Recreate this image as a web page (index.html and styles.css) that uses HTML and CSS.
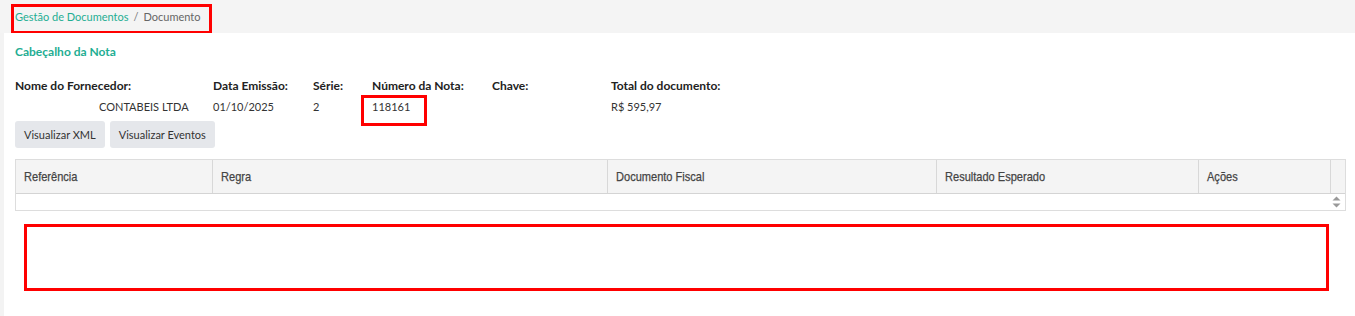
FILE: index.html
```html
<!DOCTYPE html>
<html lang="pt">
<head>
<meta charset="utf-8">
<link rel="stylesheet" href="styles.css">
</head>
<body>
<div class="topbar">
  <nav class="crumbs"><a class="crumb-link">Gestão de Documentos</a><span class="sep">/</span><span class="crumb-cur">Documento</span></nav>
  <div class="mark mark-crumb"></div>
</div>
<main class="page">
  <h2 class="section-title">Cabeçalho da Nota</h2>
  <div class="info">
    <div class="lbl">Nome do Fornecedor:</div>
    <div class="lbl">Data Emissão:</div>
    <div class="lbl">Série:</div>
    <div class="lbl">Número da Nota:</div>
    <div class="lbl">Chave:</div>
    <div class="lbl">Total do documento:</div>
    <div class="val val-name">CONTABEIS LTDA</div>
    <div class="val">01/10/2025</div>
    <div class="val">2</div>
    <div class="val val-num">118161<div class="mark mark-num"></div></div>
    <div class="val"></div>
    <div class="val">R$ 595,97</div>
  </div>
  <div class="actions">
    <button class="btn">Visualizar XML</button>
    <button class="btn">Visualizar Eventos</button>
  </div>
  <div class="grid">
    <div class="grid-head">
      <div class="th c1"><span class="th-txt">Referência</span></div>
      <div class="th c2"><span class="th-txt">Regra</span></div>
      <div class="th c3"><span class="th-txt">Documento Fiscal</span></div>
      <div class="th c4"><span class="th-txt">Resultado Esperado</span></div>
      <div class="th c5"><span class="th-txt">Ações</span></div>
      <div class="th c6"></div>
    </div>
    <div class="grid-body">
      <svg class="spin" width="9" height="12" viewBox="0 0 9 12"><path d="M4.5 0.5 L8.5 4.5 L0.5 4.5 Z" fill="#999"/><path d="M0.5 7.5 L8.5 7.5 L4.5 11.5 Z" fill="#999"/></svg>
    </div>
  </div>
  <div class="empty-box"></div>
</main>
</body>
</html>
```
FILE: styles.css
```css
html, body { margin: 0; padding: 0; }
body {
  background: #f3f3f3;
  font-family: Lato, "Noto Sans", sans-serif;
  font-size: 12px;
  color: #333;
  width: 1355px;
  height: 316px;
  overflow: hidden;
}
.topbar {
  position: relative;
  height: 33px;
  background: #f4f4f4;
  display: flex;
  align-items: center;
  padding-left: 15px;
}
.crumbs { display: flex; align-items: center; gap: 5px; font-size: 11px; line-height: 16px; }
.crumb-link { color: #1fae93; }
.sep { color: #777; }
.crumb-cur { color: #666; }
.mark { position: absolute; border: 3px solid #f00; box-sizing: border-box; }
.mark-crumb { left: 11px; top: 4px; width: 201px; height: 30px; }
.page {
  margin-left: 4px;
  background: #fff;
  height: 283px;
  padding: 11px 9px 0 11px;
  box-sizing: border-box;
  position: relative;
}
.section-title {
  margin: 0;
  font-size: 12px;
  line-height: 16px;
  font-weight: 700;
  color: #1fae93;
}
.info {
  margin-top: 18px;
  display: grid;
  grid-template-columns: 198px 100px 59px 120px 119px 200px;
  row-gap: 5px;
}
.lbl { font-weight: 700; line-height: 16px; color: #222; }
.val { line-height: 16px; color: #333; font-size: 11px; }
.val-name { padding-left: 84px; }
.val-num { position: relative; }
.mark-num { left: -11px; top: -4px; width: 66px; height: 31px; }
.actions { display: flex; gap: 5px; margin-top: 6px; }
.btn {
  font-family: inherit;
  font-size: 11px;
  color: #333;
  background: #e5e7eb;
  border: none;
  border-radius: 3px;
  height: 27px;
  padding: 0 9px;
}
.grid {
  margin-top: 11px;
  width: 1331px;
  border: 1px solid #ddd;
  box-sizing: border-box;
}
.grid-head {
  display: flex;
  height: 34px;
  background: #f4f4f4;
  border-bottom: 1px solid #d4d4d4;
  box-sizing: border-box;
}
.th {
  box-sizing: border-box;
  border-right: 1px solid #d8d8d8;
  padding-left: 8px;
  display: flex;
  align-items: center;
  font-family: "Liberation Sans", Arial, sans-serif;
  font-size: 13px;
  color: #444;
}
.th-txt {
  display: inline-block;
  transform: scaleX(0.85);
  transform-origin: left center;
  white-space: nowrap;
  -webkit-text-stroke: 0.25px #444;
}
.c1 { width: 197px; }
.c2 { width: 395px; }
.c3 { width: 329px; }
.c4 { width: 262px; }
.c5 { width: 132px; }
.c6 { flex: 1; border-right: none; }
.grid-body {
  height: 16px;
  display: flex;
  justify-content: flex-end;
  align-items: center;
  padding-right: 4px;
}
.empty-box {
  position: absolute;
  left: 20px;
  top: 191px;
  width: 1305px;
  height: 67px;
  border: 3px solid #f00;
  box-sizing: border-box;
}
```
